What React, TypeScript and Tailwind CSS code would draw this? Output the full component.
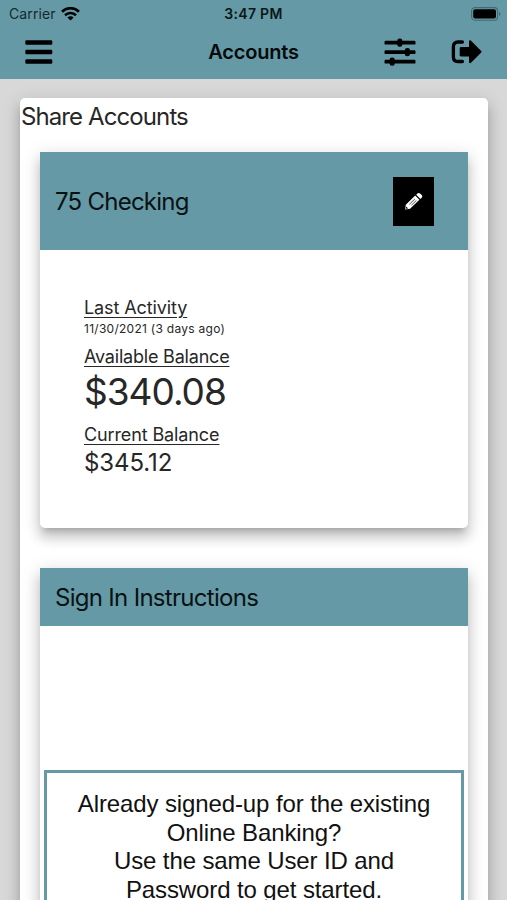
import React from "react";

const raised =
  "shadow-[0_6px_6px_-4px_rgba(0,0,0,0.2),0_10px_12px_1px_rgba(0,0,0,0.14),0_4px_17px_2px_rgba(0,0,0,0.12)]";

function Wifi() {
  return (
    <svg width="19" height="15" viewBox="0 0 19 15" fill="none" stroke="#000" strokeWidth="2.6">
      <path d="M1 4.8C5.8.1 13.2.1 18 4.8" />
      <path d="M4 8.2c3.1-3 7.9-3 11 0" />
      <path d="M9.5 13.6 6.4 10.5c1.7-1.6 4.5-1.6 6.2 0Z" fill="#000" stroke="none" />
    </svg>
  );
}

function Battery() {
  return (
    <svg width="30" height="14" viewBox="0 0 30 14">
      <rect x="0.6" y="0.6" width="26" height="12.6" rx="3.4" fill="none" stroke="#436a72" strokeWidth="1.1" />
      <rect x="2.2" y="2.2" width="22.8" height="9.4" rx="2" fill="#000" />
      <path d="M28 4.8c1.9.7 1.9 3.6 0 4.3Z" fill="#436a72" />
    </svg>
  );
}

function Menu() {
  return (
    <svg width="28" height="24" viewBox="0 0 28 24">
      <rect x="0.3" y="0.2" width="27" height="4.6" rx="1.2" />
      <rect x="0.3" y="9.7" width="27" height="4.6" rx="1.2" />
      <rect x="0.3" y="19.2" width="27" height="4.6" rx="1.2" />
    </svg>
  );
}

function Sliders() {
  return (
    <svg width="32" height="28" viewBox="0 0 32 28">
      <rect x="0.5" y="2.8" width="31" height="3.8" rx="1.2" />
      <rect x="0.5" y="12.3" width="31" height="3.8" rx="1.2" />
      <rect x="0.5" y="21.8" width="31" height="3.8" rx="1.2" />
      <rect x="13.2" y="0.6" width="5.2" height="8.2" rx="2.4" />
      <rect x="20.8" y="10.1" width="5.2" height="8.2" rx="2.4" />
      <rect x="5.6" y="19.6" width="5.2" height="8.2" rx="2.4" />
    </svg>
  );
}

function LogOut() {
  return (
    <svg width="31" height="26" viewBox="0 0 31 26">
      <path
        d="M11.4 3H7C4 3 2.4 4.6 2.4 7.6v10.3c0 3 1.6 4.6 4.6 4.6h4.4"
        fill="none"
        stroke="#000"
        strokeWidth="3.3"
        strokeLinecap="round"
      />
      <path d="M10 8h8V2.4c0-1.2 1.3-1.5 2-.7l10 10c.7.7.7 1.4 0 2.1l-10 10c-.8.8-2 .4-2-.7v-5.6h-8c-.8 0-1.3-.5-1.3-1.2V9.2C8.700 8.500 9.200 8 10 8Z" />
    </svg>
  );
}

function Pencil() {
  return (
    <svg width="18" height="18" viewBox="0 0 18 18">
      <path d="M.2 17.4.8 12.800 10.2 3.600l4.200 4.200-9.300 9Z" fill="#fff" />
      <path d="m11.200 2.700 1.200-1.200c.8-.8 1.900-.8 2.700 0l1.600 1.600c.8.8.8 1.900 0 2.700l-1.200 1.200Z" fill="#fff" />
      <path d="m4.3 12.400 5.600-5.400M6.400 13.200l5-4.800" stroke="#000" strokeWidth="0.7" />
      <path d="m.9 16.7.3-2.200 2 2Z" fill="#000" />
    </svg>
  );
}

export default function App() {
  return (
    <div className="h-[900px] w-[507px] overflow-hidden bg-[#d8d8d8] font-['Inter',sans-serif] text-[#272727]">
      <header className="h-[79px] bg-[#6599a5] text-black">
        <div className="grid h-[26px] grid-cols-3 items-center">
          <div className="flex items-center gap-[5px] pl-[9px]">
            <span className="text-[14px] leading-[26px] tracking-[0.1px] text-[#132a2e]">Carrier</span>
            <Wifi />
          </div>
          <span className="text-center text-[14px] font-semibold leading-[28px] tracking-[0.3px] text-[#0a1719]">3:47 PM</span>
          <div className="flex justify-end pr-[6px]">
            <Battery />
          </div>
        </div>
        <div className="grid h-[53px] grid-cols-[1fr_auto_1fr] items-center">
          <div className="pb-px pl-[25px]">
            <Menu />
          </div>
          <h1 className="text-[20px] font-semibold leading-[53px] tracking-[-0.2px] text-[#04090a]">Accounts</h1>
          <div className="flex items-center justify-end gap-[35px] pb-[2px] pr-[25px]">
            <Sliders />
            <LogOut />
          </div>
        </div>
      </header>

      <main className={`ml-5 mr-[19px] mt-[19px] h-[840px] rounded-[5px] bg-white ${raised}`}>
        <h2 className="h-[54px] pl-px text-[24px] leading-[37px] tracking-[-0.9px]">Share Accounts</h2>

        <section className={`mx-5 h-[376px] rounded-b-[5px] bg-white ${raised}`}>
          <div className="flex h-[98px] items-center justify-between bg-[#6599a5] pl-[15px] pr-[34px] text-black">
            <h3 className="pt-[2px] text-[24px] leading-[36px] tracking-[-0.75px] text-[#081113]">75 Checking</h3>
            <button className="flex h-[49px] w-[41px] items-center justify-center bg-black">
              <Pencil />
            </button>
          </div>
          <div className="pl-[44px] pt-[46px]">
            <div className="h-[24px] text-[18px] leading-[24px] tracking-[-0.1px] underline underline-offset-[3px]">Last Activity</div>
            <div className="h-[25px] text-[12px] leading-[17px] tracking-[0.27px]">11/30/2021 (3 days ago)</div>
            <div className="h-[24px] text-[18px] leading-[24px] tracking-[-0.2px] underline underline-offset-[3px]">Available Balance</div>
            <div className="h-[54px] text-[37px] leading-[46px] tracking-[-1px]">$340.08</div>
            <div className="h-[24px] text-[18px] leading-[24px] tracking-[-0.12px] underline underline-offset-[3px]">Current Balance</div>
            <div className="text-[24px] leading-[32px] tracking-[-0.1px]">$345.12</div>
          </div>
        </section>

        <section className={`mx-5 mt-10 h-[400px] bg-white ${raised}`}>
          <h3 className="h-[58px] bg-[#6599a5] pl-[15px] text-[24px] leading-[59px] tracking-[-0.7px] text-[#081113]">
            Sign In Instructions
          </h3>
          <div className="mx-1 mt-[144px] h-[190px] border-[3px] border-[#6599a5] pt-[17px] text-center font-['Liberation_Sans',sans-serif] text-[24px] leading-[28.5px] tracking-[-0.11px] text-[#111]">
            Already signed-up for the existing
            <br />
            Online Banking?
            <br />
            Use the same User ID and
            <br />
            Password to get started.
          </div>
        </section>
      </main>
    </div>
  );
}
